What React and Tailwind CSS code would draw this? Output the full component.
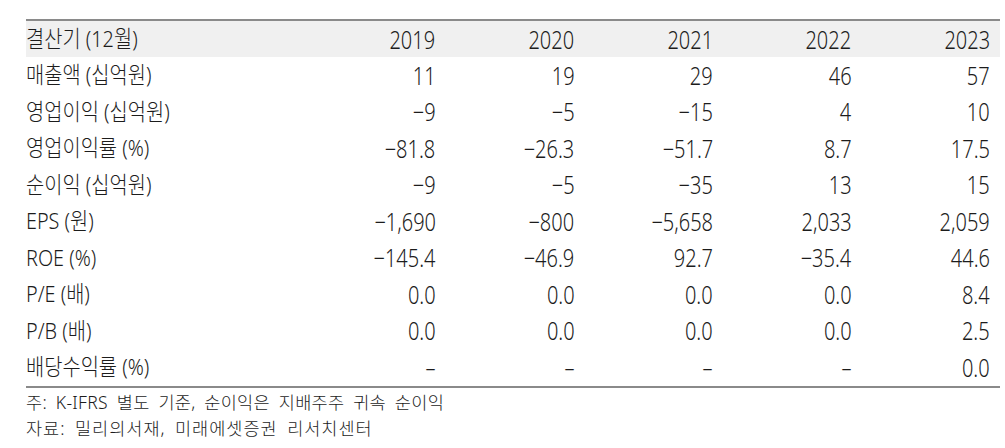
import React from "react";

const years = ["2019", "2020", "2021", "2022", "2023"];
const rows = [
  ["매출액 (십억원)", "11", "19", "29", "46", "57"],
  ["영업이익 (십억원)", "−9", "−5", "−15", "4", "10"],
  ["영업이익률 (%)", "−81.8", "−26.3", "−51.7", "8.7", "17.5"],
  ["순이익 (십억원)", "−9", "−5", "−35", "13", "15"],
  ["EPS (원)", "−1,690", "−800", "−5,658", "2,033", "2,059"],
  ["ROE (%)", "−145.4", "−46.9", "92.7", "−35.4", "44.6"],
  ["P/E (배)", "0.0", "0.0", "0.0", "0.0", "8.4"],
  ["P/B (배)", "0.0", "0.0", "0.0", "0.0", "2.5"],
  ["배당수익률 (%)", "–", "–", "–", "–", "0.0"],
];

const font = { fontFamily: '"Noto Sans", "Noto Sans CJK KR", sans-serif' };

function Cell({ children }) {
  return (
    <div className="w-[138.6px] shrink-0 text-right pr-[10px]">
      <span
        className="inline-block origin-right scale-x-[0.8] text-[25px] leading-[30px] font-light"
        style={font}
      >
        {children}
      </span>
    </div>
  );
}

function Label({ children }) {
  return (
    <div className="w-[281px] shrink-0">
      <span
        className="inline-block origin-left scale-x-[0.88] text-[22.5px] leading-[30px] font-light whitespace-nowrap"
        style={font}
      >
        {children}
      </span>
    </div>
  );
}

export default function App() {
  return (
    <div className="w-[1005px] h-[448px] bg-white text-[#1c1c1c] pt-[19px] pl-[26px] pr-[5px]">
      <div className="border-t-2 border-b-2 border-[#8a8a8a]">
        <div className="flex h-[36px] items-center bg-[#f0f0f0]">
          <Label>결산기 (12월)</Label>
          {years.map((y) => (
            <Cell key={y}>{y}</Cell>
          ))}
        </div>
        {rows.map((r) => (
          <div key={r[0]} className="flex h-[36.5px] items-center">
            <Label>{r[0]}</Label>
            {r.slice(1).map((v, i) => (
              <Cell key={i}>{v}</Cell>
            ))}
          </div>
        ))}
      </div>
      <div
        className="text-[17.5px] font-light leading-[26px] pt-[1px] [word-spacing:4px]"
        style={font}
      >
        <div className="tracking-[0.3px]">주: K-IFRS 별도 기준, 순이익은 지배주주 귀속 순이익</div>
        <div className="tracking-[1px]">자료: 밀리의서재, 미래에셋증권 리서치센터</div>
      </div>
    </div>
  );
}
